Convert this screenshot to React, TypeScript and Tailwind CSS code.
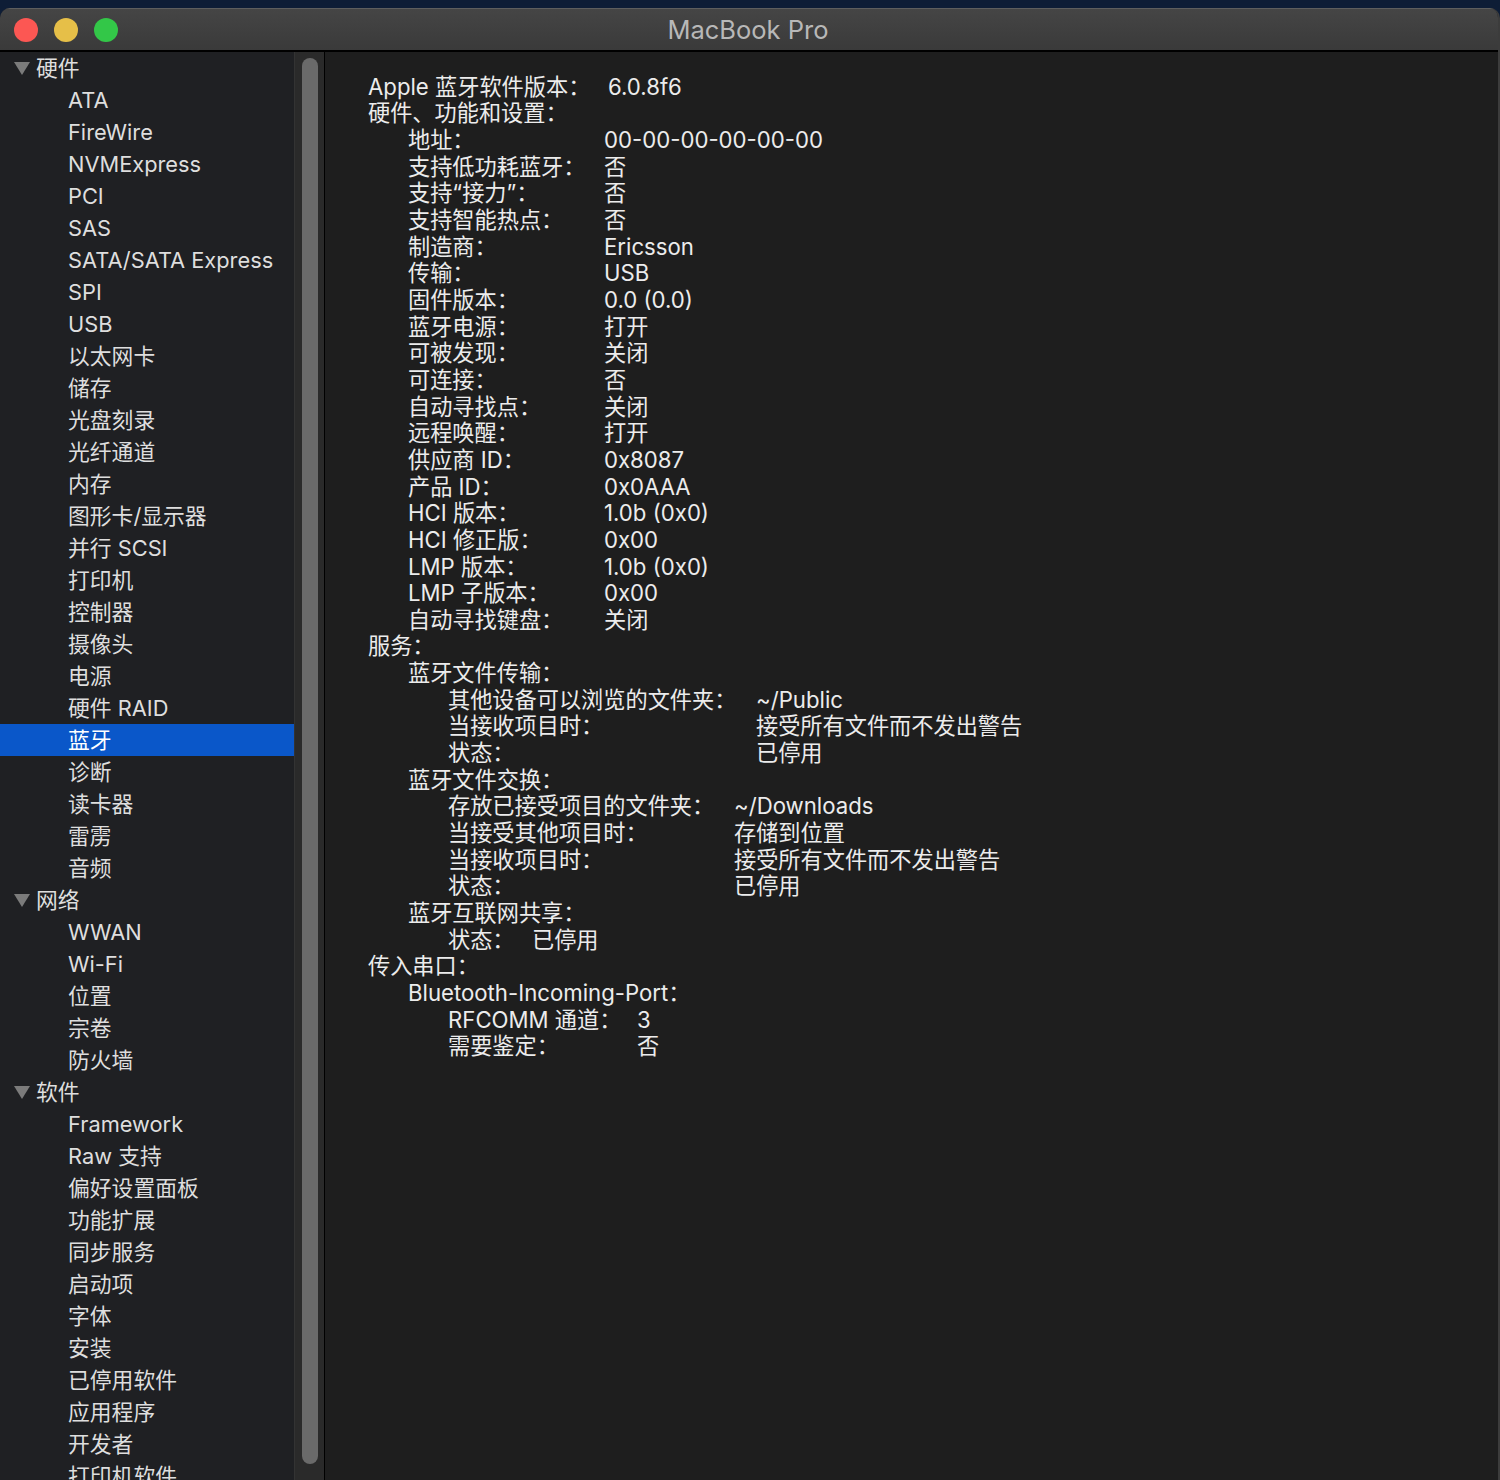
import React from "react";

type SideItem = { label: string; header?: boolean; selected?: boolean };

const sidebar: SideItem[] = [
    { label: "硬件", header: true },
    { label: "ATA" },
    { label: "FireWire" },
    { label: "NVMExpress" },
    { label: "PCI" },
    { label: "SAS" },
    { label: "SATA/SATA Express" },
    { label: "SPI" },
    { label: "USB" },
    { label: "以太网卡" },
    { label: "储存" },
    { label: "光盘刻录" },
    { label: "光纤通道" },
    { label: "内存" },
    { label: "图形卡/显示器" },
    { label: "并行 SCSI" },
    { label: "打印机" },
    { label: "控制器" },
    { label: "摄像头" },
    { label: "电源" },
    { label: "硬件 RAID" },
    { label: "蓝牙", selected: true },
    { label: "诊断" },
    { label: "读卡器" },
    { label: "雷雳" },
    { label: "音频" },
    { label: "网络", header: true },
    { label: "WWAN" },
    { label: "Wi-Fi" },
    { label: "位置" },
    { label: "宗卷" },
    { label: "防火墙" },
    { label: "软件", header: true },
    { label: "Framework" },
    { label: "Raw 支持" },
    { label: "偏好设置面板" },
    { label: "功能扩展" },
    { label: "同步服务" },
    { label: "启动项" },
    { label: "字体" },
    { label: "安装" },
    { label: "已停用软件" },
    { label: "应用程序" },
    { label: "开发者" },
    { label: "打印机软件" },
];

const hardware: [string, string][] = [
    ["地址：", "00-00-00-00-00-00"],
    ["支持低功耗蓝牙：", "否"],
    ["支持“接力”：", "否"],
    ["支持智能热点：", "否"],
    ["制造商：", "Ericsson"],
    ["传输：", "USB"],
    ["固件版本：", "0.0 (0.0)"],
    ["蓝牙电源：", "打开"],
    ["可被发现：", "关闭"],
    ["可连接：", "否"],
    ["自动寻找点：", "关闭"],
    ["远程唤醒：", "打开"],
    ["供应商 ID：", "0x8087"],
    ["产品 ID：", "0x0AAA"],
    ["HCI 版本：", "1.0b (0x0)"],
    ["HCI 修正版：", "0x00"],
    ["LMP 版本：", "1.0b (0x0)"],
    ["LMP 子版本：", "0x00"],
    ["自动寻找键盘：", "关闭"],
];

const Row = ({ indent, width, label, value }: { indent: string; width: string; label: string; value?: string }) => (
    <div className={`flex h-[26.67px] items-center whitespace-nowrap ${indent}`}>
        <span className={`shrink-0 ${width}`}>{label}</span>
        {value && <span>{value}</span>}
    </div>
);

const Line = ({ indent, children }: { indent: string; children: React.ReactNode }) => (
    <div className={`flex h-[26.67px] items-center whitespace-nowrap ${indent}`}>{children}</div>
);

export default function App() {
    return (
        <div
            className="w-[1500px] h-[1480px] bg-[#0e1d36] pt-2 overflow-hidden"
            style={{ fontFamily: 'Inter, "Noto Sans CJK SC", sans-serif' }}
        >
            <div className="h-[1472px] flex flex-col rounded-t-[10px] overflow-hidden bg-[#1e1e1e] border-r-2 border-[#3c3c3c]">
                {/* title bar */}
                <div className="h-[44px] shrink-0 flex items-center relative bg-gradient-to-b from-[#454545] to-[#3a3a3a] border-t border-[#5e5e5e] border-b-2 border-b-black">
                    <div className="flex gap-[16px] pl-[14px]">
                        <span className="w-6 h-6 rounded-full bg-[#fc5753]" />
                        <span className="w-6 h-6 rounded-full bg-[#e6bf48]" />
                        <span className="w-6 h-6 rounded-full bg-[#33c748]" />
                    </div>
                    <div className="flex-1 text-center text-[25.5px] text-[#b8b8b8] pr-[120px] pt-[2px]">MacBook Pro</div>
                </div>

                <div className="flex flex-1 min-h-0">
                    {/* sidebar */}
                    <div className="w-[294px] shrink-0 bg-[#1f2023] text-[#dedede] text-[21.8px] overflow-hidden">
                        {sidebar.map((it) => (
                            <div
                                key={it.label}
                                className={`h-8 flex items-center whitespace-nowrap ${
                                    it.selected ? "bg-[#0a57c9] text-white" : ""
                                } ${it.header ? "pl-[14px]" : "pl-[68px]"}`}
                            >
                                {it.header && (
                                    <svg width="16" height="14" viewBox="0 0 16 14" className="mr-[6px]">
                                        <path d="M0 1 L16 1 L8 14 Z" fill="#7b7b7b" />
                                    </svg>
                                )}
                                {it.label}
                            </div>
                        ))}
                    </div>

                    {/* scrollbar */}
                    <div className="w-[31px] shrink-0 bg-[#2a2a2a] border-l border-[#333] border-r border-r-black pt-[6px] pb-[16px] flex justify-center">
                        <div className="w-[16px] h-full rounded-full bg-[#6a6a6a]" />
                    </div>

                    {/* content */}
                    <div className="flex-1 bg-[#1e1e1e] text-[#ececec] text-[22.2px] pl-[43px] pt-[21px]">
                        <Row indent="" width="w-[240px]" label="Apple 蓝牙软件版本：" value="6.0.8f6" />
                        <Row indent="" width="" label="硬件、功能和设置：" />
                        {hardware.map(([l, v]) => (
                            <Row key={l} indent="pl-[40px]" width="w-[196px]" label={l} value={v} />
                        ))}
                        <Row indent="" width="" label="服务：" />
                        <Row indent="pl-[40px]" width="" label="蓝牙文件传输：" />
                        <Row indent="pl-[80px]" width="w-[308px]" label="其他设备可以浏览的文件夹：" value="~/Public" />
                        <Row indent="pl-[80px]" width="w-[308px]" label="当接收项目时：" value="接受所有文件而不发出警告" />
                        <Row indent="pl-[80px]" width="w-[308px]" label="状态：" value="已停用" />
                        <Row indent="pl-[40px]" width="" label="蓝牙文件交换：" />
                        <Row indent="pl-[80px]" width="w-[286px]" label="存放已接受项目的文件夹：" value="~/Downloads" />
                        <Row indent="pl-[80px]" width="w-[286px]" label="当接受其他项目时：" value="存储到位置" />
                        <Row indent="pl-[80px]" width="w-[286px]" label="当接收项目时：" value="接受所有文件而不发出警告" />
                        <Row indent="pl-[80px]" width="w-[286px]" label="状态：" value="已停用" />
                        <Row indent="pl-[40px]" width="" label="蓝牙互联网共享：" />
                        <Row indent="pl-[80px]" width="w-[84px]" label="状态：" value="已停用" />
                        <Row indent="" width="" label="传入串口：" />
                        <Line indent="pl-[40px]">Bluetooth-Incoming-Port：</Line>
                        <Row indent="pl-[80px]" width="w-[189px]" label="RFCOMM 通道：" value="3" />
                        <Row indent="pl-[80px]" width="w-[189px]" label="需要鉴定：" value="否" />
                    </div>
                </div>
            </div>
        </div>
    );
}
